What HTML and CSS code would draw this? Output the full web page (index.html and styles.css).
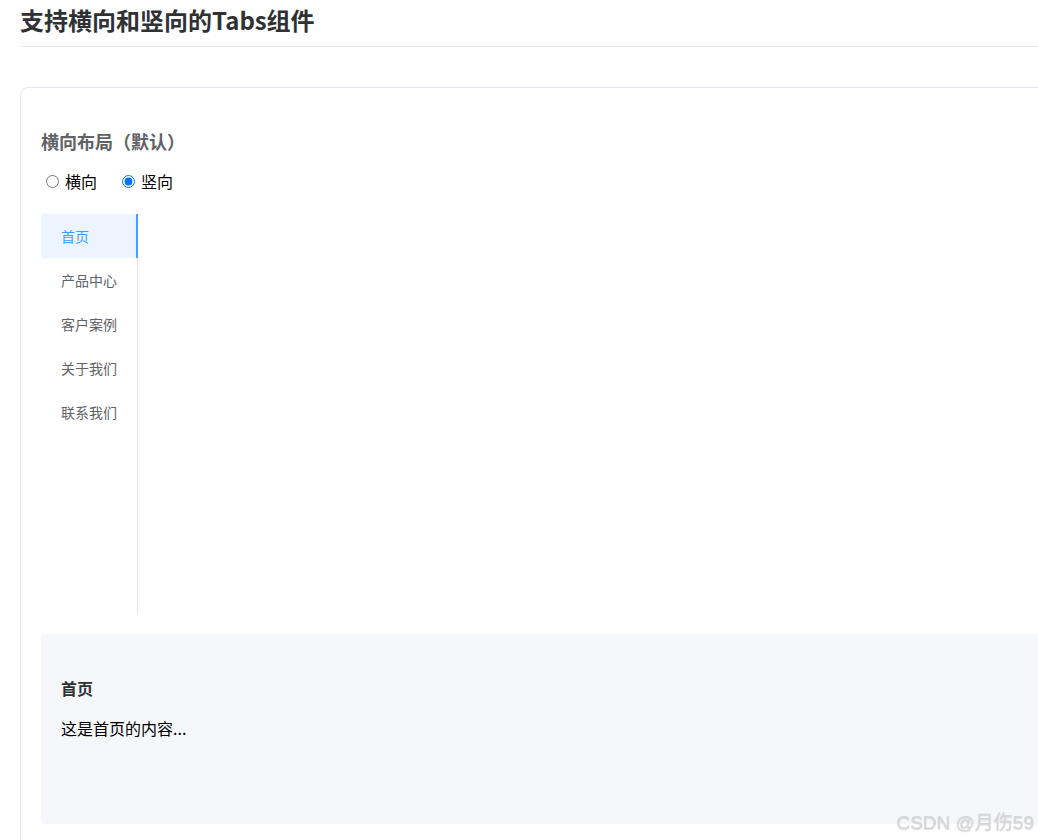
FILE: index.html
```html
<!DOCTYPE html>
<html lang="zh">
<head>
<meta charset="utf-8">
<title>Tabs</title>
<link rel="stylesheet" href="styles.css">
</head>
<body>
<div class="page">
  <h1 class="page-title">支持横向和竖向的Tabs组件</h1>
  <div class="card">
    <h3 class="section-title">横向布局（默认）</h3>
    <div class="radios">
      <label class="radio"><input type="radio" name="dir"> 横向</label>
      <label class="radio"><input type="radio" name="dir" checked> 竖向</label>
    </div>
    <div class="tabs">
      <ul class="tab-nav">
        <li class="tab active">首页</li>
        <li class="tab">产品中心</li>
        <li class="tab">客户案例</li>
        <li class="tab">关于我们</li>
        <li class="tab">联系我们</li>
      </ul>
      <div class="tab-pane"></div>
    </div>
    <div class="content-box">
      <h4 class="content-title">首页</h4>
      <p class="content-text">这是首页的内容...</p>
    </div>
  </div>
</div>
<div class="watermark">CSDN @月伤59</div>
</body>
</html>
```

FILE: styles.css
```css
html, body {
  margin: 0;
  padding: 0;
  overflow: hidden;
  background: #fff;
}
body {
  font-family: "Noto Sans CJK SC", "Noto Sans", sans-serif;
  color: #000;
}
.page {
  padding: 0 0 0 20px;
  width: 1200px;
}
.page-title {
  margin: 0;
  font-size: 24px;
  line-height: 36px;
  padding: 2px 0 8px;
  font-weight: 700;
  color: #303133;
  border-bottom: 1px solid #e4e7ed;
}
.card {
  margin-top: 40px;
  border: 1px solid #e4e7ed;
  border-radius: 8px;
  padding: 31px 20px 40px;
}
.section-title {
  margin: 0;
  font-size: 18px;
  line-height: 44px;
  font-weight: 700;
  color: #606266;
}
.radios {
  display: flex;
  gap: 25px;
  margin-top: 2px;
  height: 32px;
  align-items: center;
  padding-left: 5px;
}
.radio {
  display: flex;
  align-items: center;
  font-size: 16px;
  color: #000;
}
.radio input {
  margin: 0 6px 0 0;
  width: 13px;
  height: 13px;
}
.tabs {
  display: flex;
  margin-top: 17px;
  height: 400px;
}
.tab-nav {
  list-style: none;
  margin: 0;
  padding: 0;
  width: 96px;
  border-right: 1px solid #e4e7ed;
}
.tab {
  height: 44px;
  line-height: 44px;
  padding-left: 20px;
  font-size: 14px;
  color: #606266;
  margin-right: -1px;
}
.tab.active {
  background: #ecf5ff;
  color: #409eff;
  border-right: 2px solid #409eff;
}
.tab-pane {
  flex: 1;
}
.content-box {
  margin-top: 20px;
  background: #f5f7fa;
  border-radius: 4px;
  padding: 40px 20px 70px;
  height: 80px;
}
.content-title {
  margin: 0;
  font-size: 16px;
  line-height: 28px;
  font-weight: 700;
  color: #303133;
}
.content-text {
  margin: 12px 0 0;
  font-size: 16px;
  line-height: 28px;
  color: #000;
}
.watermark {
  position: absolute;
  right: 4px;
  bottom: 6px;
  font-family: "Liberation Sans", "Noto Sans CJK SC", sans-serif;
  font-weight: 400;
  font-size: 19px;
  color: #d6d6d6;
  text-shadow: 0 1px 1px rgba(0,0,0,0.15);
}
```
